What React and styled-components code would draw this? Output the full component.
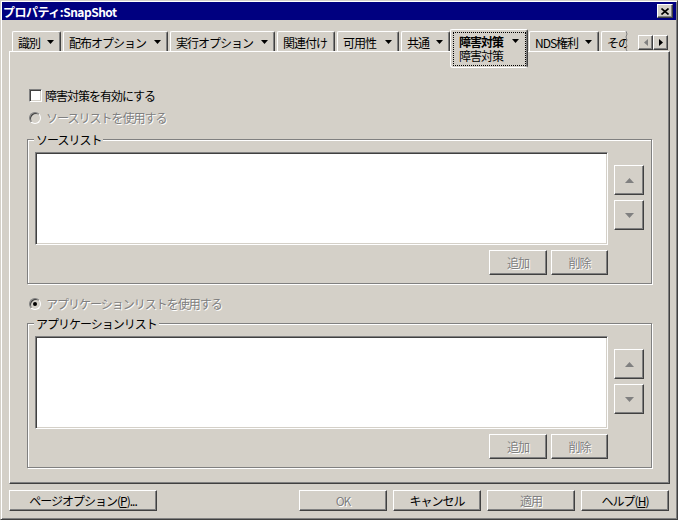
import React from 'react'
import styled, { createGlobalStyle, css } from 'styled-components'

const FACE = '#d4d0c8'
const SHADOW = '#808080'
const DARK = '#404040'

const GlobalStyle = createGlobalStyle`
  html, body {
    margin: 0;
    padding: 0;
    background: ${FACE};
  }
  body {
    font-family: "Noto Sans CJK JP", "Liberation Sans", sans-serif;
    font-size: 12px;
    line-height: 13px;
    letter-spacing: -1px;
    color: #000;
  }
  * {
    box-sizing: border-box;
  }
`

const raised = css`
  background: ${FACE};
  border: 1px solid;
  border-color: #fff ${DARK} ${DARK} #fff;
  box-shadow: inset -1px -1px 0 ${SHADOW};
`

const sunken = css`
  border: 1px solid;
  border-color: ${SHADOW} #fff #fff ${SHADOW};
  box-shadow: inset 1px 1px 0 ${DARK}, inset -1px -1px 0 ${FACE};
`

const disabledText = css`
  color: ${SHADOW};
  text-shadow: 1px 1px 0 #fff;
`

const Window = styled.div`
  width: 678px;
  height: 520px;
  padding: 1px;
  background: ${FACE};
  border: 1px solid;
  border-color: ${FACE} ${DARK} ${DARK} ${FACE};
  box-shadow: inset 1px 1px 0 #fff, inset -1px -1px 0 ${SHADOW};
  display: flex;
  flex-direction: column;
`

const TitleBar = styled.div`
  height: 18px;
  flex-shrink: 0;
  background: #000080;
  display: flex;
  align-items: center;
  padding: 0 3px 0 1px;
`

const Title = styled.span`
  color: #fff;
  font-weight: bold;
  letter-spacing: -0.5px;
  flex: 1;
`

const CloseButton = styled.div`
  ${raised};
  width: 16px;
  height: 14px;
  display: flex;
  align-items: center;
  justify-content: center;
`

const Body = styled.div`
  flex: 1;
  display: flex;
  flex-direction: column;
  padding: 9px 6px 0 7px;
`

const TabStrip = styled.div`
  height: 22px;
  display: flex;
  flex-shrink: 0;
`

const TabsViewport = styled.div`
  position: relative;
  width: 620px;
  padding-left: 3px;
  display: flex;
  gap: 2px;
  overflow-x: clip;
  overflow-y: visible;
`

const TornEdge = styled.svg`
  position: absolute;
  right: 0;
  top: 2px;
`

const Tab = styled.div`
  width: ${p => p.$w}px;
  height: 20px;
  margin-top: 2px;
  flex-shrink: 0;
  background: ${FACE};
  border-top: 1px solid #fff;
  border-left: 1px solid #fff;
  border-right: 1px solid ${DARK};
  border-radius: 2px 2px 0 0;
  box-shadow: inset -1px 0 0 ${SHADOW};
  display: flex;
  align-items: center;
  justify-content: space-between;
  padding: 1px 6px 0 5px;
  white-space: nowrap;
`

const ActiveTab = styled.div`
  width: 78px;
  height: 39px;
  margin: 0 -1px 0 -2px;
  flex-shrink: 0;
  position: relative;
  z-index: 1;
  background: ${FACE};
  border: 1px solid #fff;
  border-right-color: ${DARK};
  border-radius: 2px 2px 3px 3px;
  box-shadow: inset -1px 0 0 ${SHADOW};
  padding: 2px 1px 1px 2px;
`

const FocusBox = styled.div`
  height: 100%;
  border: 1px dotted #000;
  padding: 1px 6px 0 5px;
  display: flex;
  flex-direction: column;
`

const TabLine = styled.div`
  height: 14px;
  display: flex;
  align-items: center;
  justify-content: space-between;
  font-weight: ${p => (p.$bold ? 'bold' : 'normal')};
`

const ScrollButtons = styled.div`
  display: flex;
  margin: 6px 2px 0 auto;
`

const ScrollButton = styled.div`
  ${raised};
  width: 15px;
  height: 15px;
  display: flex;
  align-items: center;
  justify-content: center;
`

const Panel = styled.div`
  height: 433px;
  flex-shrink: 0;
  border: 1px solid;
  border-color: #fff ${DARK} ${DARK} #fff;
  box-shadow: inset -1px -1px 0 ${SHADOW};
  padding: 37px 17px 0 17px;
  display: flex;
  flex-direction: column;
`

const OptionRow = styled.div`
  display: flex;
  align-items: center;
  gap: ${p => (p.$radio ? 5 : 3)}px;
  margin-left: 2px;
  margin-top: ${p => p.$top || 0}px;
  height: 13px;
`

const CheckBox = styled.div`
  ${sunken};
  width: 13px;
  height: 13px;
  background: #fff;
`

const Radio = styled.div`
  ${sunken};
  width: 12px;
  height: 12px;
  border-radius: 50%;
  background: ${FACE};
  position: relative;
  &::after {
    content: '';
    display: ${p => (p.$checked ? 'block' : 'none')};
    position: absolute;
    left: 3px;
    top: 3px;
    width: 4px;
    height: 4px;
    border-radius: 50%;
    background: #000;
  }
`

const Label = styled.span`
  ${p => p.$disabled && disabledText};
  white-space: nowrap;
`

const GroupBox = styled.div`
  position: relative;
  margin-top: ${p => p.$top}px;
  height: 145px;
  border: 1px solid ${SHADOW};
  box-shadow: inset 1px 1px 0 #fff, 1px 1px 0 #fff;
  padding: 12px 7px 8px 7px;
  display: grid;
  grid-template-columns: 573px 30px;
  grid-template-rows: 93px 25px;
  column-gap: 6px;
  row-gap: 5px;
`

const Legend = styled.span`
  position: absolute;
  top: -7px;
  left: 6px;
  padding: 0 2px;
  background: ${FACE};
  line-height: 13px;
`

const ListBox = styled.div`
  border: 1px solid;
  border-color: ${SHADOW} #fff #fff ${SHADOW};
  box-shadow: inset 1px 1px 0 ${DARK}, inset -1px -1px 0 ${FACE};
  background: #fff;
`

const MoveButtons = styled.div`
  display: flex;
  flex-direction: column;
  gap: 5px;
  padding-top: 13px;
`

const MoveButton = styled.div`
  ${raised};
  width: 30px;
  height: 30px;
  display: flex;
  align-items: center;
  justify-content: center;
`

const ListActions = styled.div`
  grid-column: 1;
  justify-self: end;
  display: flex;
  gap: 4px;
`

const PushButton = styled.div`
  ${raised};
  width: ${p => p.$w}px;
  height: ${p => p.$h || 25}px;
  display: flex;
  align-items: center;
  justify-content: center;
  white-space: nowrap;
  ${p => p.$disabled && disabledText};
  u {
    text-decoration: underline;
    text-underline-offset: 1px;
  }
`

const Footer = styled.div`
  margin-top: 6px;
  padding-right: 1px;
  display: flex;
  justify-content: space-between;
`

const FooterRight = styled.div`
  display: flex;
  gap: 6px;
`

const DropArrow = () => (
  <svg width="7" height="4" viewBox="0 0 7 4">
    <polygon points="0,0 7,0 3.5,4" fill="#000" />
  </svg>
)

const Triangle = ({ dir, color }) => {
  const pts = {
    up: '0,5 9,5 4.5,0',
    down: '0,0 9,0 4.5,5',
  }
  return (
    <svg width="9" height="5" viewBox="0 0 9 5">
      <polygon points={pts[dir]} fill={color} />
    </svg>
  )
}

const SideArrow = ({ dir, color }) => (
  <svg width="4" height="7" viewBox="0 0 4 7">
    <polygon points={dir === 'left' ? '4,0 4,7 0,3.5' : '0,0 0,7 4,3.5'} fill={color} />
  </svg>
)

const CloseGlyph = () => (
  <svg width="8" height="7" viewBox="0 0 8 7">
    <path d="M0.5 0.5 L7.5 6.5 M7.5 0.5 L0.5 6.5" stroke="#000" strokeWidth="1.6" />
  </svg>
)

const tabs = [
  { label: '識別', w: 49, arrow: true },
  { label: '配布オプション', w: 105, arrow: true },
  { label: '実行オプション', w: 105, arrow: true },
  { label: '関連付け', w: 58 },
  { label: '可用性', w: 62, arrow: true },
  { label: '共通', w: 49, arrow: true },
  { label: '障害対策', active: true },
  { label: 'NDS権利', w: 70, arrow: true },
  { label: 'その他', w: 40 },
]

const ListGroup = ({ title, top }) => (
  <GroupBox $top={top}>
    <Legend>{title}</Legend>
    <ListBox />
    <MoveButtons>
      <MoveButton>
        <Triangle dir="up" color={SHADOW} />
      </MoveButton>
      <MoveButton>
        <Triangle dir="down" color={SHADOW} />
      </MoveButton>
    </MoveButtons>
    <ListActions>
      <PushButton $w={58} $disabled>追加</PushButton>
      <PushButton $w={57} $disabled>削除</PushButton>
    </ListActions>
  </GroupBox>
)

export default function App() {
  return (
    <>
      <GlobalStyle />
      <Window>
        <TitleBar>
          <Title>プロパティ:SnapShot</Title>
          <CloseButton>
            <CloseGlyph />
          </CloseButton>
        </TitleBar>
        <Body>
          <TabStrip>
            <TabsViewport>
              {tabs.map(t =>
                t.active ? (
                  <ActiveTab key={t.label}>
                    <FocusBox>
                      <TabLine $bold>
                        {t.label}
                        <DropArrow />
                      </TabLine>
                      <TabLine>{t.label}</TabLine>
                    </FocusBox>
                  </ActiveTab>
                ) : (
                  <Tab key={t.label} $w={t.w}>
                    {t.label}
                    {t.arrow && <DropArrow />}
                  </Tab>
                )
              )}
              <TornEdge width="4" height="20" viewBox="0 0 4 20">
                <rect x="2" y="0" width="2" height="20" fill={FACE} />
                <polyline
                  points="1,0 2,3 1,6 2,9 1,12 2,15 1,18 2,20"
                  fill="none"
                  stroke={SHADOW}
                  strokeWidth="1"
                />
              </TornEdge>
            </TabsViewport>
            <ScrollButtons>
              <ScrollButton>
                <SideArrow dir="left" color={SHADOW} />
              </ScrollButton>
              <ScrollButton>
                <SideArrow dir="right" color="#000" />
              </ScrollButton>
            </ScrollButtons>
          </TabStrip>
          <Panel>
            <OptionRow>
              <CheckBox />
              <Label>障害対策を有効にする</Label>
            </OptionRow>
            <OptionRow $radio $top={9}>
              <Radio />
              <Label $disabled>ソースリストを使用する</Label>
            </OptionRow>
            <ListGroup title="ソースリスト" top={15} />
            <OptionRow $radio $top={13}>
              <Radio $checked />
              <Label $disabled>アプリケーションリストを使用する</Label>
            </OptionRow>
            <ListGroup title="アプリケーションリスト" top={13} />
          </Panel>
          <Footer>
            <PushButton $w={148} $h={21}>
              ページオプション(<u>P</u>)...
            </PushButton>
            <FooterRight>
              <PushButton $w={88} $h={21} $disabled>OK</PushButton>
              <PushButton $w={88} $h={21}>キャンセル</PushButton>
              <PushButton $w={88} $h={21} $disabled>適用</PushButton>
              <PushButton $w={88} $h={21}>
                ヘルプ(<u>H</u>)
              </PushButton>
            </FooterRight>
          </Footer>
        </Body>
      </Window>
    </>
  )
}
